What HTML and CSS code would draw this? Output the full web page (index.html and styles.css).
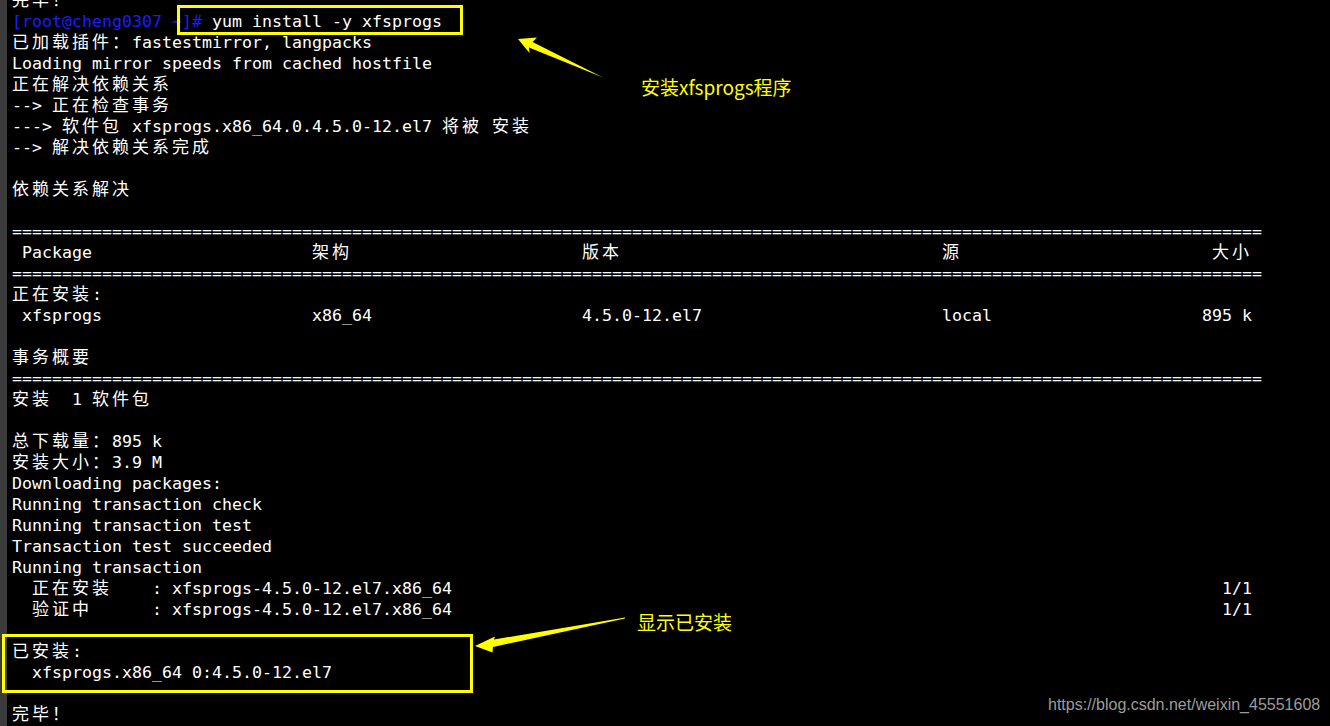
FILE: index.html
```html
<!DOCTYPE html>
<html lang="zh-CN">
<head>
<meta charset="utf-8">
<title>yum install xfsprogs</title>
<link rel="stylesheet" href="styles.css">
</head>
<body>
<div class="screen">
  <div class="gutter"></div>
  <div class="term">
    <div class="lines">
      <div class="ln"><span class="c">完毕！</span></div>
      <div class="ln"><span class="prompt">[root@cheng0307 ~]#</span> yum install -y xfsprogs</div>
      <div class="ln"><span class="c">已加载插件：</span>fastestmirror, langpacks</div>
      <div class="ln">Loading mirror speeds from cached hostfile</div>
      <div class="ln"><span class="c">正在解决依赖关系</span></div>
      <div class="ln">--&gt; <span class="c">正在检查事务</span></div>
      <div class="ln">---&gt; <span class="c">软件包</span> xfsprogs.x86_64.0.4.5.0-12.el7 <span class="c">将被</span> <span class="c">安装</span></div>
      <div class="ln">--&gt; <span class="c">解决依赖关系完成</span></div>
      <div class="ln"></div>
      <div class="ln"><span class="c">依赖关系解决</span></div>
      <div class="ln"></div>
      <div class="ln">=============================================================================================================================</div>
      <div class="ln tbl"><span>Package</span><span><span class="c">架构</span></span><span><span class="c">版本</span></span><span><span class="c">源</span></span><span><span class="c">大小</span></span></div>
      <div class="ln">=============================================================================================================================</div>
      <div class="ln"><span class="c">正在安装</span>:</div>
      <div class="ln tbl"><span>xfsprogs</span><span>x86_64</span><span>4.5.0-12.el7</span><span>local</span><span>895 k</span></div>
      <div class="ln"></div>
      <div class="ln"><span class="c">事务概要</span></div>
      <div class="ln">=============================================================================================================================</div>
      <div class="ln"><span class="c">安装</span>  1 <span class="c">软件包</span></div>
      <div class="ln"></div>
      <div class="ln"><span class="c">总下载量：</span>895 k</div>
      <div class="ln"><span class="c">安装大小：</span>3.9 M</div>
      <div class="ln">Downloading packages:</div>
      <div class="ln">Running transaction check</div>
      <div class="ln">Running transaction test</div>
      <div class="ln">Transaction test succeeded</div>
      <div class="ln">Running transaction</div>
      <div class="ln prog"><span>  <span class="c">正在安装</span>    : xfsprogs-4.5.0-12.el7.x86_64</span><span>1/1</span></div>
      <div class="ln prog"><span>  <span class="c">验证中</span>      : xfsprogs-4.5.0-12.el7.x86_64</span><span>1/1</span></div>
      <div class="ln"></div>
      <div class="ln"><span class="c">已安装</span>:</div>
      <div class="ln">  xfsprogs.x86_64 0:4.5.0-12.el7</div>
      <div class="ln"></div>
      <div class="ln"><span class="c">完毕！</span></div>
    </div>
  </div>

  <svg class="marks" width="1330" height="726" viewBox="0 0 1330 726" aria-hidden="true">
    <rect x="178.5" y="6.5" width="283" height="27" fill="none" stroke="#ffff00" stroke-width="3"/>
    <rect x="3.5" y="635.5" width="468" height="56" fill="none" stroke="#ffff00" stroke-width="3"/>
    <polygon points="518,39 537,37.5 532.5,42 603,77.5 529,47.5 529.5,53" fill="#ffff00"/>
    <polygon points="475,646 495,636.5 494,639.5 625,617.5 625,618.5 493,647 492.5,652.5" fill="#ffff00"/>
  </svg>
  <div class="note note-install">安装xfsprogs程序</div>
  <div class="note note-done">显示已安装</div>
  <div class="wm">https://blog.csdn.net/weixin_45551608</div>
</div>
</body>
</html>
```

FILE: styles.css
```css
html, body {
  margin: 0;
  padding: 0;
  background: #000;
}

body {
  width: 1330px;
  height: 726px;
  overflow: hidden;
}

.screen {
  position: relative;
  display: flex;
  width: 1330px;
  height: 726px;
  overflow: hidden;
  background: #000;
}

.gutter {
  flex: 0 0 7px;
  background: #3b3b3b;
}

.term {
  flex: 1;
  padding-left: 5px;
  overflow: hidden;
  color: #fff;
  font-family: "DejaVu Sans Mono", monospace;
  font-size: 16.61px;
  line-height: 21px;
}

.lines {
  margin-top: -10.5px;
}

.ln {
  height: 21px;
  white-space: pre;
}

.c {
  font-family: "Noto Sans CJK SC", sans-serif;
  font-size: 17px;
  letter-spacing: 3px;
  line-height: 17px;
}

.prompt {
  color: #1c1cff;
}

.tbl {
  display: grid;
  grid-template-columns: 290px 270px 360px 1fr auto;
  width: 1240px;
  padding-left: 10px;
  box-sizing: border-box;
}

.prog {
  display: flex;
  justify-content: space-between;
  width: 1240px;
}

.marks {
  position: absolute;
  left: 0;
  top: 0;
  pointer-events: none;
}

.note {
  position: absolute;
  color: #ffff00;
  font-family: "Noto Sans CJK SC", sans-serif;
  font-size: 19px;
  line-height: 19px;
  white-space: nowrap;
}

.note-install {
  left: 641px;
  top: 77px;
}

.note-done {
  left: 637px;
  top: 612px;
}

.wm {
  position: absolute;
  left: 1048px;
  top: 696px;
  color: #9c9c9c;
  font-family: "Liberation Sans", Arial, sans-serif;
  font-size: 16px;
  line-height: 18px;
  white-space: nowrap;
}
```
